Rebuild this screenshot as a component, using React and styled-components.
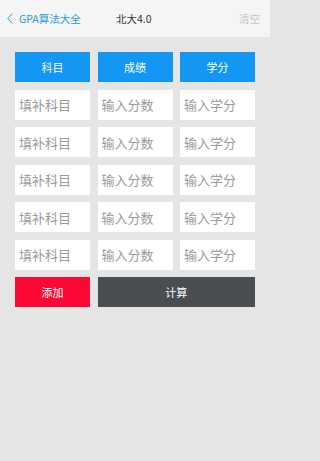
import React from "react";
import styled, { createGlobalStyle } from "styled-components";

const Global = createGlobalStyle`
  html, body { margin: 0; padding: 0; background: #e5e5e5; }
  body { font-family: "Noto Sans CJK SC", "Noto Sans", sans-serif; }
  * { box-sizing: border-box; }
`;

const Page = styled.div`
  width: 100%;
  min-width: 270px;
  height: 461px;
  background: #e5e5e5;
  display: flex;
  flex-direction: column;
`;

const Header = styled.div`
  width: 270px;
  height: 37px;
  background: #f5f5f5;
  display: flex;
  align-items: center;
  padding: 0 10px 0 7px;
  font-size: 10.5px;
`;

const Back = styled.div`
  display: flex;
  align-items: center;
  gap: 6px;
  color: #2a9ad8;
  width: 109px;
`;

const Title = styled.div`
  color: #333;
  flex: 1;
`;

const Clear = styled.div`
  color: #c6c6c6;
`;

const Grid = styled.div`
  display: grid;
  grid-template-columns: repeat(3, 75px);
  grid-auto-rows: 30px;
  column-gap: 7.5px;
  row-gap: 7.5px;
  padding: 15px 15px 0;
`;

const Head = styled.div`
  background: #1396f4;
  color: #fff;
  font-size: 11px;
  display: flex;
  align-items: center;
  justify-content: center;
`;

const Field = styled.input`
  border: none;
  outline: none;
  background: #fff;
  width: 100%;
  height: 100%;
  padding: 0 0 0 4px;
  font-family: inherit;
  font-size: 13px;
  color: #333;
  &::placeholder { color: #9a9a9a; }
`;

const Action = styled.button`
  border: none;
  background: ${(p) => p.$bg};
  color: #fff;
  font-family: inherit;
  font-size: 11px;
  grid-column: ${(p) => p.$span || "auto"};
  padding: 0;
`;

const rows = [0, 1, 2, 3, 4];

export default function App() {
  return (
    <Page>
      <Global />
      <Header>
        <Back>
          <svg width="6" height="11" viewBox="0 0 6 11">
            <path d="M5.2 0.6 L0.8 5.5 L5.2 10.4" fill="none" stroke="#2a9ad8" strokeWidth="1" />
          </svg>
          <span>GPA算法大全</span>
        </Back>
        <Title>北大4.0</Title>
        <Clear>清空</Clear>
      </Header>
      <Grid>
        <Head>科目</Head>
        <Head>成绩</Head>
        <Head>学分</Head>
        {rows.map((r) => (
          <React.Fragment key={r}>
            <Field placeholder="填补科目" />
            <Field placeholder="输入分数" />
            <Field placeholder="输入学分" />
          </React.Fragment>
        ))}
        <Action $bg="#fc0a34">添加</Action>
        <Action $bg="#4b4e50" $span="span 2">计算</Action>
      </Grid>
    </Page>
  );
}
